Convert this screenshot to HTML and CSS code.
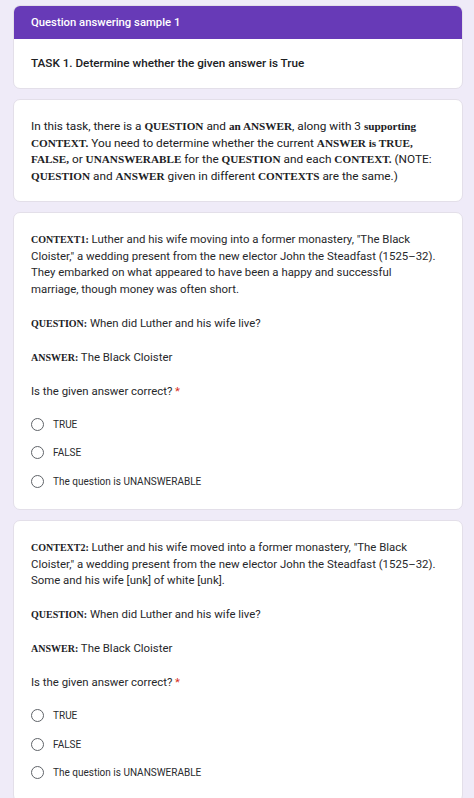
FILE: index.html
```html
<!DOCTYPE html>
<html>
<head>
<meta charset="utf-8">
<link rel="stylesheet" href="styles.css">
</head>
<body>
<div class="page">
  <section class="card title-card">
    <div class="banner">Question answering sample 1</div>
    <div class="task">TASK 1. Determine whether the given answer is True</div>
  </section>

  <section class="card intro">
    <p>In this task, there is a <b>QUESTION</b> and <b>an ANSWER</b>, along with 3 <b>supporting</b><br><b>CONTEXT.</b> You need to determine whether the current <b>ANSWER is TRUE,</b><br><b>FALSE,</b> or <b>UNANSWERABLE</b> for the <b>QUESTION</b> and each <b>CONTEXT.</b> (NOTE:<br><b>QUESTION</b> and <b>ANSWER</b> given in different <b>CONTEXTS</b> are the same.)</p>
  </section>

  <section class="card item">
    <p><b>CONTEXT1:</b> Luther and his wife moving into a former monastery, "The Black<br>Cloister," a wedding present from the new elector John the Steadfast (1525–32).<br>They embarked on what appeared to have been a happy and successful<br>marriage, though money was often short.</p>
    <p><b>QUESTION:</b> When did Luther and his wife live?</p>
    <p><b>ANSWER:</b> The Black Cloister</p>
    <p class="ask">Is the given answer correct? <span class="req">*</span></p>
    <div class="options">
      <label class="opt"><span class="radio"></span>TRUE</label>
      <label class="opt"><span class="radio"></span>FALSE</label>
      <label class="opt"><span class="radio"></span>The question is UNANSWERABLE</label>
    </div>
  </section>

  <section class="card item">
    <p><b>CONTEXT2:</b> Luther and his wife moved into a former monastery, "The Black<br>Cloister," a wedding present from the new elector John the Steadfast (1525–32).<br>Some and his wife [unk] of white [unk].</p>
    <p><b>QUESTION:</b> When did Luther and his wife live?</p>
    <p><b>ANSWER:</b> The Black Cloister</p>
    <p class="ask">Is the given answer correct? <span class="req">*</span></p>
    <div class="options">
      <label class="opt"><span class="radio"></span>TRUE</label>
      <label class="opt"><span class="radio"></span>FALSE</label>
      <label class="opt"><span class="radio"></span>The question is UNANSWERABLE</label>
    </div>
  </section>
</div>
</body>
</html>
```

FILE: styles.css
```css
html, body {
  margin: 0;
  padding: 0;
  background: #efebf8;
}
body {
  font-family: Roboto, "Liberation Sans", sans-serif;
  color: #202124;
}
.page {
  display: flex;
  flex-direction: column;
  gap: 10px;
  width: 450px;
  margin-left: 13px;
  padding-top: 5px;
}
.card {
  background: #fff;
  border: 1px solid #e3dfe9;
  border-radius: 7px;
  box-sizing: border-box;
}
.title-card {
  overflow: hidden;
}
.banner {
  background: #673ab7;
  color: #fff;
  font-size: 11.3px;
  font-weight: 500;
  height: 33px;
  line-height: 33px;
  padding-left: 17px;
}
.task {
  font-size: 11.7px;
  font-weight: 500;
  height: 49px;
  line-height: 49px;
  padding-left: 17px;
}
.card p {
  margin: 0;
  white-space: nowrap;
}
b {
  font-family: "Liberation Serif", serif;
  font-weight: bold;
  line-height: 10px;
}
.intro {
  padding: 18px 10px 17px 17px;
}
.intro p {
  font-size: 11.8px;
  line-height: 16.6px;
}
.intro b {
  font-size: 11.2px;
}
.item {
  padding: 18px 10px 14px 17px;
  display: flex;
  flex-direction: column;
  gap: 17.5px;
}
.item p {
  font-size: 11.4px;
  line-height: 16.5px;
  color: #27282b;
}
.item b {
  font-size: 10px;
  color: #202124;
}
.req {
  color: #d93025;
}
.options {
  display: flex;
  flex-direction: column;
  margin-top: -7px;
}
.opt {
  display: flex;
  align-items: center;
  height: 28.5px;
  font-size: 10px;
  gap: 9px;
  color: #2a2b2e;
}
.radio {
  width: 13px;
  height: 13px;
  border: 1.8px solid #5f6368;
  border-radius: 50%;
  box-sizing: border-box;
}
```
